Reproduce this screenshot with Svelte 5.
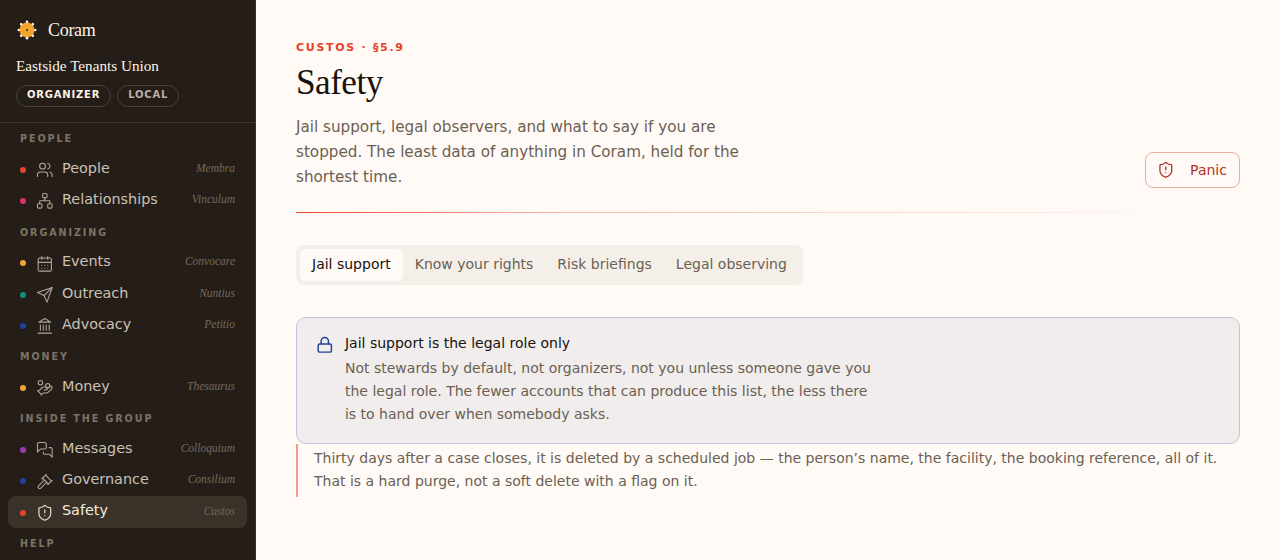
<script>
  const sections = [
    { label: 'People', items: [
      { name: 'People', latin: 'Membra', dot: '#e8432e', icon: 'users' },
      { name: 'Relationships', latin: 'Vinculum', dot: '#d8336f', icon: 'network' } ] },
    { label: 'Organizing', items: [
      { name: 'Events', latin: 'Convocare', dot: '#f5a52e', icon: 'calendar' },
      { name: 'Outreach', latin: 'Nuntius', dot: '#0f8f7e', icon: 'send' },
      { name: 'Advocacy', latin: 'Petitio', dot: '#23409c', icon: 'bank' } ] },
    { label: 'Money', items: [
      { name: 'Money', latin: 'Thesaurus', dot: '#f5a52e', icon: 'coins' } ] },
    { label: 'Inside the group', items: [
      { name: 'Messages', latin: 'Colloquium', dot: '#9b3bb5', icon: 'messages' },
      { name: 'Governance', latin: 'Consilium', dot: '#23409c', icon: 'gavel' },
      { name: 'Safety', latin: 'Custos', dot: '#e8432e', icon: 'shield', active: true } ] },
    { label: 'Help', items: [] }
  ];
  const tabs = ['Jail support', 'Know your rights', 'Risk briefings', 'Legal observing'];
</script>

{#snippet icon(n)}
  <svg class="ico" viewBox="0 0 24 24" fill="none" stroke="currentColor" stroke-width="1.5" stroke-linecap="round" stroke-linejoin="round">
    {#if n === 'users'}
      <path d="M16 21v-2a4 4 0 0 0-4-4H6a4 4 0 0 0-4 4v2"/><circle cx="9" cy="7" r="4"/><path d="M22 21v-2a4 4 0 0 0-3-3.87"/><path d="M16 3.13a4 4 0 0 1 0 7.75"/>
    {:else if n === 'network'}
      <rect x="9" y="2" width="6" height="6" rx="1.5"/><rect x="2" y="16" width="6" height="6" rx="1.5"/><rect x="16" y="16" width="6" height="6" rx="1.5"/><path d="M5 16v-3a1 1 0 0 1 1-1h12a1 1 0 0 1 1 1v3"/><path d="M12 12V8"/>
    {:else if n === 'calendar'}
      <path d="M8 2v4M16 2v4"/><rect x="3" y="4" width="18" height="18" rx="2"/><path d="M3 10h18M8 14h.01M12 14h.01M16 14h.01M8 18h.01M12 18h.01M16 18h.01"/>
    {:else if n === 'send'}
      <path d="m22 2-7 20-4-9-9-4Z"/><path d="M22 2 11 13"/>
    {:else if n === 'bank'}
      <path d="M3 22h18M6 18v-7M10 18v-7M14 18v-7M18 18v-7M12 2l8 5H4Z"/>
    {:else if n === 'coins'}
      <path d="M11 15h2a2 2 0 1 0 0-4h-3c-.6 0-1.1.2-1.4.6L3 17"/><path d="m7 21 1.6-1.4c.3-.4.8-.6 1.4-.6h4c1.1 0 2.1-.4 2.8-1.2l4.6-4.4a2 2 0 0 0-2.75-2.91l-4.2 3.9"/><path d="m2 16 6 6"/><circle cx="16" cy="9" r="2.9"/><circle cx="6" cy="5" r="3"/>
    {:else if n === 'messages'}
      <path d="M14 9a2 2 0 0 1-2 2H6l-4 4V4a2 2 0 0 1 2-2h8a2 2 0 0 1 2 2z"/><path d="M18 9h2a2 2 0 0 1 2 2v11l-4-4h-6a2 2 0 0 1-2-2v-1"/>
    {:else if n === 'gavel'}
      <path d="m14 13-7.5 7.5a2.1 2.1 0 0 1-3-3L11 10"/><path d="m16 16 6-6"/><path d="m8 8 6-6"/><path d="m9 7 8 8"/><path d="m21 11-8-8"/>
    {:else if n === 'shield'}
      <path d="M20 13c0 5-3.5 7.5-7.66 8.95a1 1 0 0 1-.67-.01C7.5 20.5 4 18 4 13V6a1 1 0 0 1 1-1c2 0 4.5-1.2 6.24-2.72a1.17 1.17 0 0 1 1.52 0C14.51 3.81 17 5 19 5a1 1 0 0 1 1 1z"/><path d="M12 8v4M12 16h.01"/>
    {:else if n === 'lock'}
      <rect x="3" y="11" width="18" height="11" rx="2"/><path d="M7 11V7a5 5 0 0 1 10 0v4"/>
    {/if}
  </svg>
{/snippet}

<div class="page">
  <aside class="side">
    <div class="brand">
      <svg class="logo" viewBox="0 0 24 24">
        <circle cx="12" cy="12" r="9" fill="#f5a52e"/>
        <g fill="#fbf3e6">
          {#each [0,45,90,135,180,225,270,315] as a}
            <circle cx="12" cy="2.2" r="1.6" transform="rotate({a} 12 12)"/>
          {/each}
        </g>
        <circle cx="12" cy="12" r="1.1" fill="#221c16"/>
      </svg>
      <span class="brand-name">Coram</span>
    </div>
    <div class="org">Eastside Tenants Union</div>
    <div class="chips"><span class="chip strong">Organizer</span><span class="chip">Local</span></div>
    <nav class="nav">
      {#each sections as s}
        <div class="sec">{s.label}</div>
        {#each s.items as it}
          <div class="row" class:active={it.active}>
            <span class="dot" style="background:{it.dot}"></span>
            {@render icon(it.icon)}
            <span class="name">{it.name}</span>
            <span class="latin">{it.latin}</span>
          </div>
        {/each}
      {/each}
    </nav>
  </aside>
  <main class="main">
    <header class="head">
      <div class="intro">
        <div class="eyebrow">Custos · §5.9</div>
        <h1>Safety</h1>
        <p class="lede">Jail support, legal observers, and what to say if you are stopped. The least data of anything in Coram, held for the shortest time.</p>
      </div>
      <button class="panic">{@render icon('shield')}<span>Panic</span></button>
    </header>
    <div class="rule"></div>
    <div class="tabs">
      {#each tabs as t, i}<span class="tab" class:on={i === 0}>{t}</span>{/each}
    </div>
    <section class="callout">
      {@render icon('lock')}
      <div>
        <div class="c-title">Jail support is the legal role only</div>
        <p class="c-body">Not stewards by default, not organizers, not you unless someone gave you the legal role. The fewer accounts that can produce this list, the less there is to hand over when somebody asks.</p>
      </div>
    </section>
    <p class="note">Thirty days after a case closes, it is deleted by a scheduled job — the person’s name, the facility, the booking reference, all of it. That is a hard purge, not a soft delete with a flag on it.</p>
  </main>
</div>

<style>
  :global(body) { margin: 0; background: #fffaf5; font-family: "DejaVu Sans", sans-serif; }
  .page { display: flex; height: 560px; overflow: hidden; }
  .side { width: 255px; flex: none; background: #251e18; border-right: 1px solid #3a3128; overflow: hidden; color: #c9c1b4; display: flex; flex-direction: column; }
  .brand { display: flex; align-items: center; gap: 11px; padding: 19px 17px 0; height: 22px; }
  .logo { width: 20px; height: 20px; }
  .brand-name { font: 18px "Liberation Serif", serif; color: #fbf3e6; letter-spacing: -0.3px; }
  .org { font: 15.2px "Liberation Serif", serif; color: #fbf3e6; padding: 15px 16px 0; line-height: 19px; }
  .chips { display: flex; gap: 6px; padding: 10px 16px 15px; border-bottom: 1px solid #3f3529; }
  .chip { font-size: 10px; font-weight: 700; letter-spacing: 0.08em; text-transform: uppercase; border: 1px solid #4a4034; border-radius: 11px; height: 20px; line-height: 18px; padding: 0 10px; color: #b9b0a3; }
  .chip.strong { color: #fbf3e6; }
  .nav { padding: 0 8px; }
  .sec { font-size: 9.6px; font-weight: 700; letter-spacing: 0.2em; text-transform: uppercase; color: #7c7367; padding: 9.2px 12px 8.8px; line-height: 13px; height: 13px; }
  .row { display: flex; align-items: center; height: 31.2px; padding: 0 12px; border-radius: 8px; }
  .row.active { background: #3a3128; color: #f3ebde; }
  .dot { width: 6px; height: 6px; border-radius: 50%; flex: none; margin: 1px 10px 0 0; }
  .ico { width: 17.6px; height: 17.6px; flex: none; }
  .row .ico { color: #aea599; margin: 1px 8.4px 0 0; }
  .row.active .ico { color: #d9d2c7; stroke-width: 1.75; }
  .name { font-size: 14.4px; flex: 1; padding-bottom: 3px; }
  .row.active .name { padding-bottom: 4px; }
  .latin { font: italic 11.5px "Liberation Serif", serif; color: #74695d; padding-bottom: 3px; }
  .main { flex: 1; padding: 41px 40px 0; min-width: 0; color: #6b5f53; }
  .head { display: flex; justify-content: space-between; align-items: flex-end; padding-bottom: 24px; }
  .intro { width: 470px; }
  .eyebrow { font-size: 11px; font-weight: 700; letter-spacing: 0.155em; text-transform: uppercase; color: #e83f2a; line-height: 13px; }
  h1 { font: 400 35.2px/44px "Liberation Serif", serif; letter-spacing: -0.015em; color: #17120e; margin: 7px 0 9.6px; }
  .lede { font-size: 15.2px; line-height: 25px; margin: 0 0 -1.6px; }
  .panic { display: flex; align-items: center; gap: 15.5px; height: 36px; width: 95px; padding: 0 11px; box-sizing: border-box; background: #fffaf5; border: 1px solid #e8b0a4; border-radius: 8px; color: #b3312a; font: 14px "DejaVu Sans", sans-serif; }
  .panic .ico { stroke-width: 1.75; }
  .rule { height: 1px; background: linear-gradient(90deg, #e8432e 0%, #fbb7a6 28%, #fdd9ce 62%, #fffaf5 96%); }
  .tabs { display: inline-flex; margin-top: 32px; background: #f4efe9; border-radius: 8px; padding: 4px; gap: 0; }
  .tab { font-size: 14px; line-height: 30px; height: 32px; padding: 0 12px; border-radius: 6px; }
  .tab.on { background: #fffaf5; color: #17120e; }
  .callout { display: flex; margin-top: 32px; border: 1px solid #c0c6dc; border-radius: 10px; background: #f0edec; padding: 15px 19px 15px; gap: 11.4px; height: 127px; box-sizing: border-box; }
  .callout .ico { color: #23409c; margin-top: 3px; stroke-width: 2; }
  .c-title { font-size: 14px; color: #17120e; line-height: 20px; }
  .c-body { font-size: 14px; line-height: 23.2px; margin: 4px 0 0; width: 535px; }
  .note { margin: 0; border-left: 2px solid #f49a88; padding: 2.5px 0 4px 16px; font-size: 14px; line-height: 23.2px; }
</style>
